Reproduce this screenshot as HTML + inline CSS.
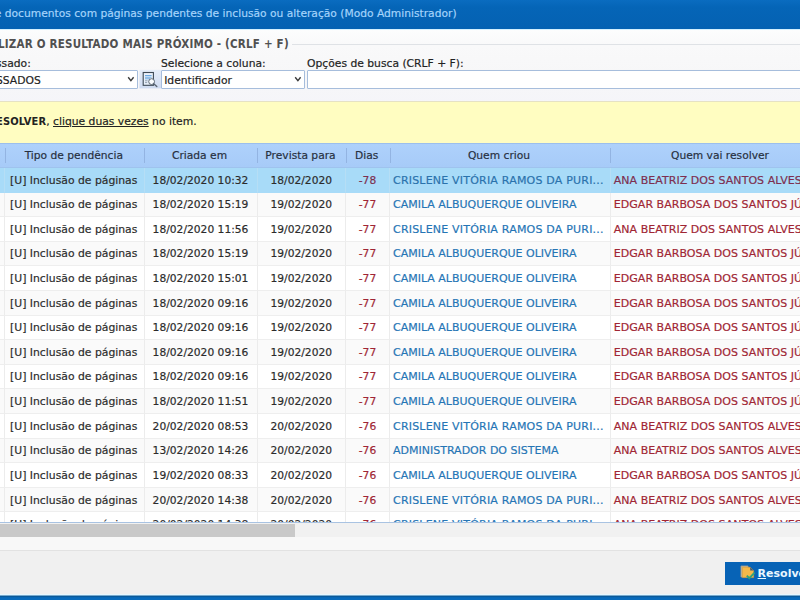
<!DOCTYPE html>
<html lang="pt-BR">
<head>
<meta charset="utf-8">
<title>Documentos com páginas pendentes</title>
<style>
html,body{margin:0;padding:0;}
body{width:800px;height:600px;overflow:hidden;position:relative;background:#f0f0f0;font-family:"DejaVu Sans","Liberation Sans",sans-serif;font-size:11px;color:#222;}
.abs{position:absolute;white-space:nowrap;}
body{-webkit-text-stroke:0.18px;}
#legend,#ytext b,#btn{-webkit-text-stroke:0;}
#title{left:0;top:0;width:800px;height:28.5px;background:linear-gradient(#0a6cc0 0,#0565b7 25%,#0461b2 100%);color:#a6d4fb;font-size:10.7px;line-height:28.5px;border-bottom:1px solid #d4f0ff;}
#title span{position:absolute;left:-5.2px;top:0;}
#filter{left:0;top:29.5px;width:800px;height:72px;background:linear-gradient(#fcfdfd 0,#f9f9fa 22%,#f7f7f8 60%,#f5f5f9 100%);}
#legline{left:291.5px;top:43.5px;width:520px;height:1px;background:#dfe2e6;}
#legend{left:-2px;top:38.4px;font-family:"DejaVu Sans Condensed","DejaVu Sans",sans-serif;font-weight:bold;font-size:11.5px;line-height:13px;color:#505050;letter-spacing:0.21px;}
.lbl{top:57.1px;font-size:10.75px;line-height:14px;color:#222;}
.sel-box{top:70.2px;height:16.4px;background:#fff;border:1px solid #a6bddc;border-radius:1px;font-size:10.75px;line-height:19.2px;color:#222;}
.sel-box svg{position:absolute;right:1.7px;top:5.2px;}
#yellow{left:0;top:101.3px;width:800px;height:41.7px;background:#fffdc1;border-top:1px solid #e6e2c4;box-sizing:border-box;}
#ytext{left:-4px;top:115.3px;font-size:10.75px;line-height:14px;color:#222;}
#ytext b{font-family:"DejaVu Sans Condensed","DejaVu Sans",sans-serif;font-size:11px;letter-spacing:0.15px;}
#grid{left:0;top:142.5px;width:800px;height:380px;overflow:hidden;background:#fff;}
#hdr{position:absolute;left:0;top:0;width:800px;height:25.4px;background:linear-gradient(#aed1fb,#a7cbf8);border-top:1px solid #9cbfec;border-bottom:1px solid #9fc3ee;box-sizing:border-box;}
#hdr .h{position:absolute;top:0;height:23.5px;line-height:23px;text-align:center;font-size:10.7px;color:#27303f;}
#hdr .sep{position:absolute;top:4.6px;height:14.6px;width:1px;background:#93b4e2;}
#rows{position:absolute;left:0;top:25.4px;width:800px;}
.r{position:relative;height:24.62px;width:800px;background:#fff;}
.r.alt{background:#fafafa;}
.r.sel{background:#a8dbf8;}
.c{position:absolute;top:0;height:24.62px;line-height:24.62px;padding-top:0.7px;box-sizing:border-box;border-right:1px solid #ececec;border-bottom:1px solid #eeeeee;white-space:nowrap;overflow:hidden;font-size:10.7px;color:#2b2b2b;}
.r.sel .c{border-right-color:#b6def5;border-bottom-color:#a8dbf8;}
.c0{left:0;width:5px;}
.c1{left:5px;width:139.5px;padding-left:5px;font-size:10.82px;}
.c2{left:144.5px;width:113px;text-align:center;}
.c3{left:257.5px;width:88.5px;text-align:center;}
.c4{left:346px;width:44px;text-align:center;color:#a02634;}
.c5{left:390px;width:221px;padding-left:3px;color:#2575b5;font-size:11px;}
.c5.w{letter-spacing:0.2px;}
.c6{left:611px;width:200px;padding-left:2.75px;color:#a02634;border-right:none;font-size:11px;letter-spacing:0.04px;}
.r.sel .c6,.r.sel .c4{color:#7d2f4f;}
.r.sel .c5{color:#2a72ac;}
#scroll{left:0;top:521.5px;width:800px;height:15.7px;background:#f1f1f1;border-top:1px solid #a9c3e2;box-sizing:border-box;}
#thumb{left:0;top:523.6px;width:295px;height:13.5px;background:#c9c9c9;}
#under{left:0;top:537.1px;width:800px;height:12.6px;background:#f8f8f8;}
#footline{left:0;top:549.6px;width:800px;height:1px;background:#e2e2e2;}
#foot{left:0;top:550.6px;width:800px;height:44px;background:#f0f0f0;}
#btn{left:725.4px;top:562px;width:80px;height:22.8px;background:#0763b6;color:#e8f6ff;font-weight:bold;font-size:11px;line-height:23px;}
#btn span{position:absolute;left:32.2px;top:0.4px;}
#btn u{text-decoration:underline;}
#bottom{left:0;top:594px;width:800px;height:6px;background:linear-gradient(#e6f8ff 0,#e6f8ff 1.2px,#0a5a9a 1.8px,#0a5a9a 3px,#086abb 3.6px);}
</style>
</head>
<body>
<div id="title" class="abs"><span>e documentos com páginas pendentes de inclusão ou alteração (Modo Administrador)</span></div>
<div id="filter" class="abs"></div>
<div id="legline" class="abs"></div>
<div id="legend" class="abs">LIZAR O RESULTADO MAIS PRÓXIMO - (CRLF + F)</div>
<div class="abs lbl" style="left:-4px">ssado:</div>
<div class="abs lbl" style="left:161px">Selecione a coluna:</div>
<div class="abs lbl" style="left:307px">Opções de busca (CRLF + F):</div>
<div class="abs sel-box" style="left:-20px;width:156.3px;"><span style="position:absolute;left:15px">SSADOS</span></div>
<svg class="abs" id="ico" style="left:139px;top:69px" width="23" height="20" viewBox="139 69 23 20">
<defs><linearGradient id="ig" x1="0" y1="0" x2="0" y2="1"><stop offset="0" stop-color="#e6edf9"/><stop offset="1" stop-color="#cfdbf1"/></linearGradient></defs>
<rect x="139.4" y="69.8" width="21.8" height="18.6" fill="url(#ig)"/>
<rect x="143.2" y="72.5" width="10.2" height="12.8" fill="#eaf1fc" stroke="#3d4955" stroke-width="1.1"/>
<path d="M145 75.5 H151.6 M145 77.2 H151.6 M145 78.8 H150" stroke="#6eaae2" stroke-width="1"/>
<path d="M145 80.8 H147.6 M145 82.6 H147.2" stroke="#8a97a6" stroke-width="0.9"/>
<circle cx="151.6" cy="81.6" r="2.9" fill="#fbfdff" stroke="#5b6672" stroke-width="1"/>
<path d="M153.7 83.8 L156.8 86.6" stroke="#5a6572" stroke-width="1.4" stroke-linecap="round"/>
</svg>
<div class="abs sel-box" style="left:161px;width:141.5px;"><span style="position:absolute;left:2.2px">Identificador</span></div>
<div class="abs sel-box" style="left:307px;width:520px;"></div>
<svg class="abs" style="left:127px;top:76px" width="8" height="7" viewBox="0 0 8 7"><path d="M1.2 1.3 L3.9 4.6 L6.6 1.3" fill="none" stroke="#3a3a3a" stroke-width="1.4"/></svg>
<svg class="abs" style="left:293.5px;top:76px" width="8" height="7" viewBox="0 0 8 7"><path d="M1.2 1.3 L3.9 4.6 L6.6 1.3" fill="none" stroke="#3a3a3a" stroke-width="1.4"/></svg>
<div id="yellow" class="abs"></div>
<div id="ytext" class="abs"><b>ESOLVER</b>, <u>clique duas vezes</u> no item.</div>
<div id="grid" class="abs">
<div id="hdr">
<div class="sep" style="left:4.5px"></div>
<div class="h" style="left:4.3px;width:139px">Tipo de pendência</div>
<div class="sep" style="left:144px"></div>
<div class="h" style="left:143px;width:113px">Criada em</div>
<div class="sep" style="left:257px"></div>
<div class="h" style="left:256px;width:89px">Prevista para</div>
<div class="sep" style="left:346px"></div>
<div class="h" style="left:344.7px;width:44px">Dias</div>
<div class="sep" style="left:390px"></div>
<div class="h" style="left:389px;width:220px">Quem criou</div>
<div class="sep" style="left:610px"></div>
<div class="h" style="left:610.5px;width:219px">Quem vai resolver</div>
</div>
<div id="rows">
<div class="r sel"><div class="c c0"></div><div class="c c1">[U] Inclusão de páginas</div><div class="c c2">18/02/2020 10:32</div><div class="c c3">18/02/2020</div><div class="c c4">-78</div><div class="c c5 w">CRISLENE VITÓRIA RAMOS DA PURI...</div><div class="c c6">ANA BEATRIZ DOS SANTOS ALVES</div></div>
<div class="r alt"><div class="c c0"></div><div class="c c1">[U] Inclusão de páginas</div><div class="c c2">18/02/2020 15:19</div><div class="c c3">19/02/2020</div><div class="c c4">-77</div><div class="c c5">CAMILA ALBUQUERQUE OLIVEIRA</div><div class="c c6">EDGAR BARBOSA DOS SANTOS JÚNIOR</div></div>
<div class="r"><div class="c c0"></div><div class="c c1">[U] Inclusão de páginas</div><div class="c c2">18/02/2020 11:56</div><div class="c c3">19/02/2020</div><div class="c c4">-77</div><div class="c c5 w">CRISLENE VITÓRIA RAMOS DA PURI...</div><div class="c c6">ANA BEATRIZ DOS SANTOS ALVES</div></div>
<div class="r alt"><div class="c c0"></div><div class="c c1">[U] Inclusão de páginas</div><div class="c c2">18/02/2020 15:19</div><div class="c c3">19/02/2020</div><div class="c c4">-77</div><div class="c c5">CAMILA ALBUQUERQUE OLIVEIRA</div><div class="c c6">EDGAR BARBOSA DOS SANTOS JÚNIOR</div></div>
<div class="r"><div class="c c0"></div><div class="c c1">[U] Inclusão de páginas</div><div class="c c2">18/02/2020 15:01</div><div class="c c3">19/02/2020</div><div class="c c4">-77</div><div class="c c5">CAMILA ALBUQUERQUE OLIVEIRA</div><div class="c c6">EDGAR BARBOSA DOS SANTOS JÚNIOR</div></div>
<div class="r alt"><div class="c c0"></div><div class="c c1">[U] Inclusão de páginas</div><div class="c c2">18/02/2020 09:16</div><div class="c c3">19/02/2020</div><div class="c c4">-77</div><div class="c c5">CAMILA ALBUQUERQUE OLIVEIRA</div><div class="c c6">EDGAR BARBOSA DOS SANTOS JÚNIOR</div></div>
<div class="r"><div class="c c0"></div><div class="c c1">[U] Inclusão de páginas</div><div class="c c2">18/02/2020 09:16</div><div class="c c3">19/02/2020</div><div class="c c4">-77</div><div class="c c5">CAMILA ALBUQUERQUE OLIVEIRA</div><div class="c c6">EDGAR BARBOSA DOS SANTOS JÚNIOR</div></div>
<div class="r alt"><div class="c c0"></div><div class="c c1">[U] Inclusão de páginas</div><div class="c c2">18/02/2020 09:16</div><div class="c c3">19/02/2020</div><div class="c c4">-77</div><div class="c c5">CAMILA ALBUQUERQUE OLIVEIRA</div><div class="c c6">EDGAR BARBOSA DOS SANTOS JÚNIOR</div></div>
<div class="r"><div class="c c0"></div><div class="c c1">[U] Inclusão de páginas</div><div class="c c2">18/02/2020 09:16</div><div class="c c3">19/02/2020</div><div class="c c4">-77</div><div class="c c5">CAMILA ALBUQUERQUE OLIVEIRA</div><div class="c c6">EDGAR BARBOSA DOS SANTOS JÚNIOR</div></div>
<div class="r alt"><div class="c c0"></div><div class="c c1">[U] Inclusão de páginas</div><div class="c c2">18/02/2020 11:51</div><div class="c c3">19/02/2020</div><div class="c c4">-77</div><div class="c c5">CAMILA ALBUQUERQUE OLIVEIRA</div><div class="c c6">EDGAR BARBOSA DOS SANTOS JÚNIOR</div></div>
<div class="r"><div class="c c0"></div><div class="c c1">[U] Inclusão de páginas</div><div class="c c2">20/02/2020 08:53</div><div class="c c3">20/02/2020</div><div class="c c4">-76</div><div class="c c5 w">CRISLENE VITÓRIA RAMOS DA PURI...</div><div class="c c6">ANA BEATRIZ DOS SANTOS ALVES</div></div>
<div class="r alt"><div class="c c0"></div><div class="c c1">[U] Inclusão de páginas</div><div class="c c2">13/02/2020 14:26</div><div class="c c3">20/02/2020</div><div class="c c4">-76</div><div class="c c5">ADMINISTRADOR DO SISTEMA</div><div class="c c6">ANA BEATRIZ DOS SANTOS ALVES</div></div>
<div class="r"><div class="c c0"></div><div class="c c1">[U] Inclusão de páginas</div><div class="c c2">19/02/2020 08:33</div><div class="c c3">20/02/2020</div><div class="c c4">-76</div><div class="c c5">CAMILA ALBUQUERQUE OLIVEIRA</div><div class="c c6">EDGAR BARBOSA DOS SANTOS JÚNIOR</div></div>
<div class="r alt"><div class="c c0"></div><div class="c c1">[U] Inclusão de páginas</div><div class="c c2">20/02/2020 14:38</div><div class="c c3">20/02/2020</div><div class="c c4">-76</div><div class="c c5 w">CRISLENE VITÓRIA RAMOS DA PURI...</div><div class="c c6">ANA BEATRIZ DOS SANTOS ALVES</div></div>
<div class="r"><div class="c c0"></div><div class="c c1">[U] Inclusão de páginas</div><div class="c c2">20/02/2020 14:38</div><div class="c c3">20/02/2020</div><div class="c c4">-76</div><div class="c c5 w">CRISLENE VITÓRIA RAMOS DA PURI...</div><div class="c c6">ANA BEATRIZ DOS SANTOS ALVES</div></div>
</div>
</div>
<div id="scroll" class="abs"></div>
<div id="thumb" class="abs"></div>
<div id="under" class="abs"></div>
<div id="footline" class="abs"></div>
<div id="foot" class="abs"></div>
<div id="btn" class="abs">
<svg style="position:absolute;left:14.6px;top:3px" width="17" height="16" viewBox="740 565 17 16">
<path d="M741 566 H748 V577 H741 Z" fill="#c9b98f" stroke="#a9a08a" stroke-width="0.8"/>
<path d="M742.5 567.3 H750.2 L753.6 570.6 V577.6 H742.5 Z" fill="#f4b94a" stroke="#d99a35" stroke-width="0.6"/>
<path d="M750.2 567.3 L753.6 570.6 H750.2 Z" fill="#3d5a78"/>
<path d="M746.8 575.6 L749.3 578.2 L754.6 572.6" fill="none" stroke="#2fa37c" stroke-width="1.9"/>
</svg>
<span><u>R</u>esolver</span></div>
<div id="bottom" class="abs"></div>
</body>
</html>
